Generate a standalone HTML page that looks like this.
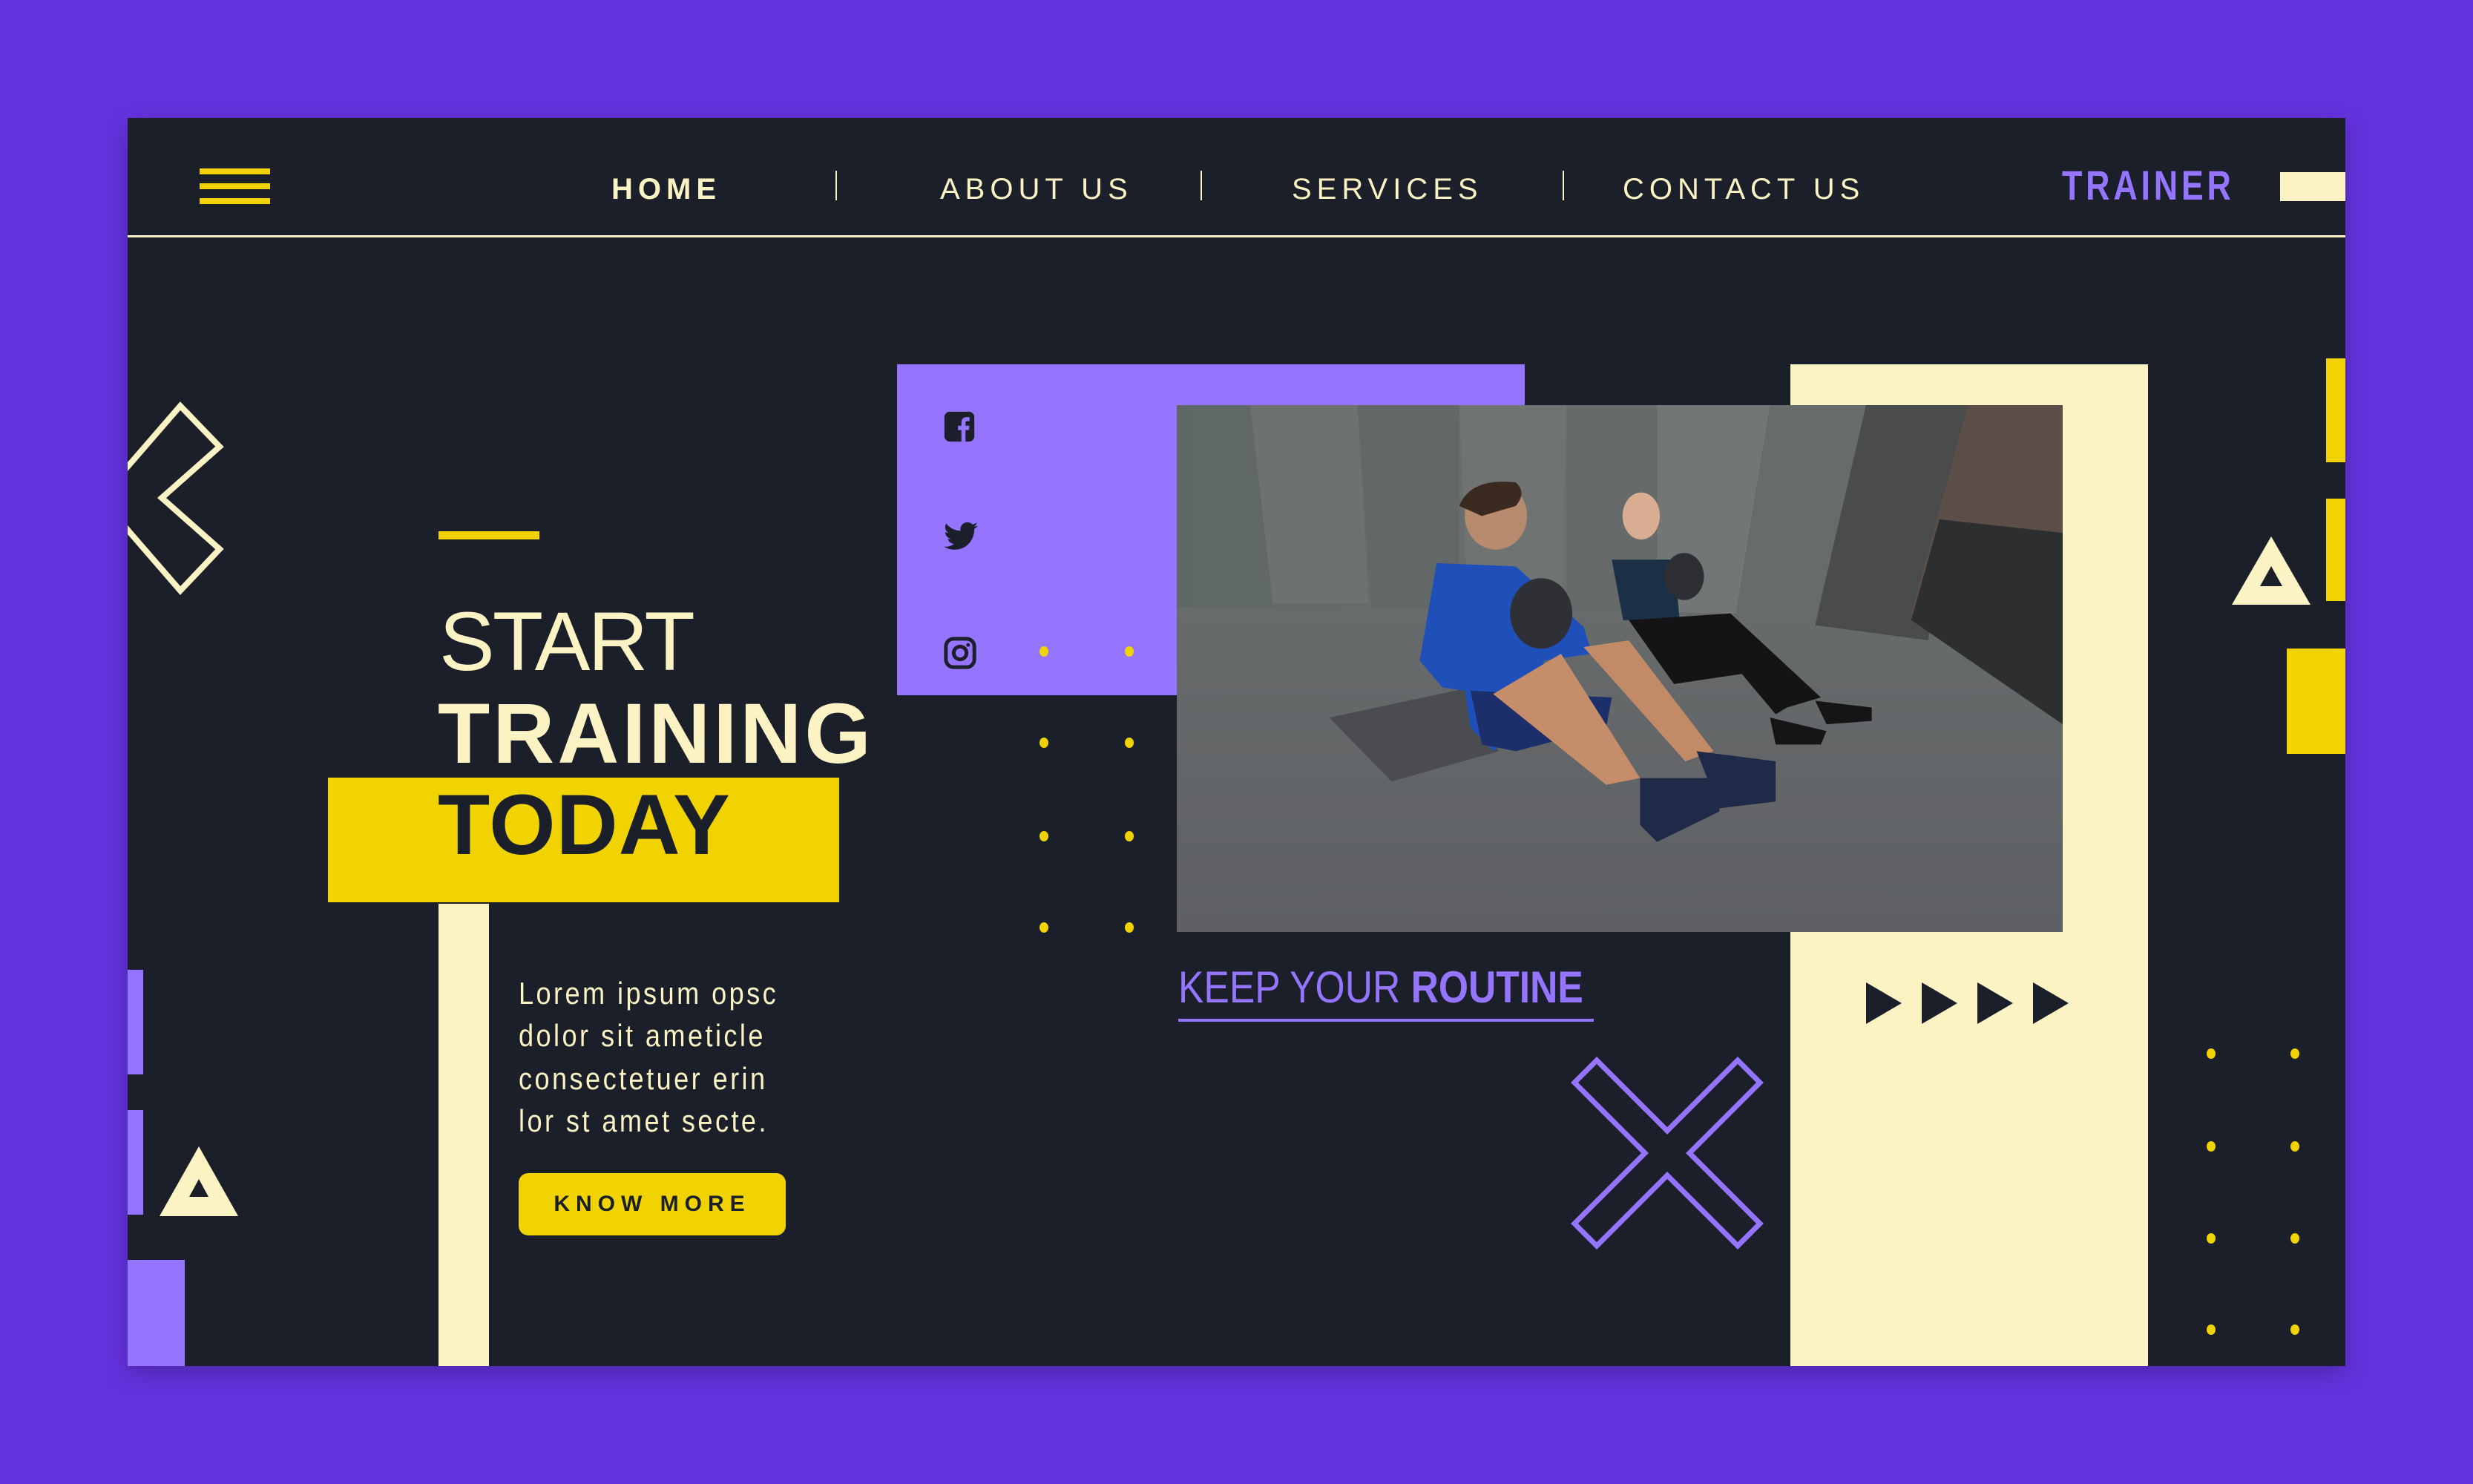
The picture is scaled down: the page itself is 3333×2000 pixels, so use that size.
<!DOCTYPE html>
<html><head><meta charset="utf-8"><style>
*{margin:0;padding:0;box-sizing:border-box}
body{width:3333px;height:2000px;background:#6433e0;position:relative;overflow:hidden;font-family:"Liberation Sans",sans-serif}
#card{position:absolute;left:172px;top:159px;width:2989px;height:1682px;background:#1b1f29;overflow:hidden;box-shadow:0 10px 30px rgba(0,0,0,.25)}
.a{position:absolute}
.nav{position:absolute;top:232px;font-size:40px;color:#fbf3c4;letter-spacing:7px;line-height:46px}
.sep{position:absolute;top:230px;width:2px;height:40px;background:#fbf3c4}
.dot{position:absolute;width:12px;height:14px;border-radius:50%;background:#f0d300}
.p{position:absolute;left:699px;font-size:42px;color:#fbf3c4;letter-spacing:4px;transform:scaleX(.86);transform-origin:left;white-space:nowrap}
</style></head><body>
<div id="card"></div>
<div class="a" style="left:0;top:0;width:3333px;height:2000px">
<div class="a" style="left:269px;top:227px;width:95px;height:8px;background:#f0d300"></div>
<div class="a" style="left:269px;top:247px;width:95px;height:8px;background:#f0d300"></div>
<div class="a" style="left:269px;top:267px;width:95px;height:8px;background:#f0d300"></div>
<div class="nav" style="left:824px;font-weight:bold">HOME</div>
<div class="sep" style="left:1126px"></div>
<div class="nav" style="left:1267px">ABOUT US</div>
<div class="sep" style="left:1618px"></div>
<div class="nav" style="left:1741px">SERVICES</div>
<div class="sep" style="left:2106px"></div>
<div class="nav" style="left:2187px">CONTACT US</div>
<div class="a" style="left:2779px;top:218px;font-size:56px;font-weight:bold;color:#9575ff;letter-spacing:6px;line-height:64px;transform:scaleX(.8);transform-origin:left">TRAINER</div>
<div class="a" style="left:3073px;top:232px;width:88px;height:39px;background:#fbf3c4"></div>
<div class="a" style="left:172px;top:317px;width:2989px;height:3px;background:#fbf3c4"></div>

<svg class="a" style="left:172px;top:526px" width="140" height="290"><polyline points="-7,111 71,21 124,76 46,145 124,214 71,270 -7,180" fill="none" stroke="#fbf3c4" stroke-width="8"/></svg>

<div class="a" style="left:591px;top:716px;width:136px;height:11px;background:#f0d300"></div>
<div class="a" style="left:592px;top:800px;font-size:112px;color:#fbf3c4;line-height:130px;letter-spacing:-3px">START</div>
<div class="a" style="left:442px;top:1048px;width:689px;height:168px;background:#f0d300"></div>
<div class="a" style="left:590px;top:924px;font-size:115px;font-weight:bold;color:#fbf3c4;line-height:130px;letter-spacing:4px">TRAINING</div>
<div class="a" style="left:590px;top:1047px;font-size:115px;font-weight:bold;color:#1b1f29;line-height:130px;letter-spacing:1px">TODAY</div>
<div class="a" style="left:591px;top:1218px;width:68px;height:623px;background:#fbf3c4"></div>

<div class="p" style="top:1315px">Lorem ipsum opsc</div>
<div class="p" style="top:1372px">dolor sit ameticle</div>
<div class="p" style="top:1430px">consectetuer erin</div>
<div class="p" style="top:1487px">lor st amet secte.</div>
<div class="a" style="left:699px;top:1581px;width:360px;height:84px;background:#f0d300;border-radius:13px;font-weight:bold;font-size:30px;letter-spacing:8px;color:#1b1f29;text-align:center;line-height:84px">KNOW MORE</div>

<div class="a" style="left:172px;top:1307px;width:21px;height:141px;background:#9575ff"></div>
<div class="a" style="left:172px;top:1496px;width:21px;height:141px;background:#9575ff"></div>
<div class="a" style="left:172px;top:1698px;width:77px;height:143px;background:#9575ff"></div>
<svg class="a" style="left:215px;top:1545px" width="106" height="95"><polygon points="53,0 106,94 0,94" fill="#fbf3c4"/><polygon points="53,44 66,68 40,68" fill="#1b1f29"/></svg>

<div class="a" style="left:1209px;top:491px;width:846px;height:446px;background:#9575ff"></div>
<svg class="a" style="left:1271px;top:553px" width="44" height="44" viewBox="0 0 24 24"><rect x="1" y="1" width="22" height="22" rx="4" fill="#1b1f29"/><path d="M16.5 23V14.5H19L19.4 11.3H16.5V9.4C16.5 8.5 16.8 7.9 18 7.9H19.5V5.1C19.2 5 18.3 5 17.3 5 15 5 13.5 6.4 13.5 8.9V11.3H11V14.5H13.5V23Z" fill="#9575ff"/></svg>
<svg class="a" style="left:1270px;top:703px" width="50" height="46" viewBox="0 0 24 22"><path d="M23 2.5c-.8.4-1.7.6-2.6.7.9-.6 1.6-1.4 2-2.5-.9.5-1.9.9-2.9 1.1C18.7.9 17.5.4 16.2.4c-2.5 0-4.5 2-4.5 4.5 0 .4 0 .7.1 1C8 5.7 4.7 3.900 2.5 1.2c-.4.7-.6 1.4-.6 2.3 0 1.6.8 2.9 2 3.7-.7 0-1.4-.2-2-.6v.1c0 2.2 1.6 4 3.6 4.4-.4.1-.8.2-1.2.2-.3 0-.6 0-.8-.1.6 1.8 2.2 3.1 4.200 3.1-1.5 1.2-3.5 1.9-5.6 1.9-.4 0-.7 0-1.100-.1 2 1.3 4.4 2 6.9 2 8.3 0 12.8-6.9 12.8-12.8v-.6c.9-.6 1.6-1.4 2.3-2.2z" fill="#1b1f29"/></svg>
<svg class="a" style="left:1271px;top:857px" width="46" height="46" viewBox="0 0 24 24"><rect x="2" y="2" width="20" height="20" rx="5.5" fill="none" stroke="#1b1f29" stroke-width="2.6"/><circle cx="12" cy="12" r="4.5" fill="none" stroke="#1b1f29" stroke-width="2.6"/><circle cx="17.6" cy="6.4" r="1.3" fill="#1b1f29"/></svg>

<div class="dot" style="left:1401px;top:871px"></div><div class="dot" style="left:1516px;top:871px"></div>
<div class="dot" style="left:1401px;top:994px"></div><div class="dot" style="left:1516px;top:994px"></div>
<div class="dot" style="left:1401px;top:1120px"></div><div class="dot" style="left:1516px;top:1120px"></div>
<div class="dot" style="left:1401px;top:1243px"></div><div class="dot" style="left:1516px;top:1243px"></div>
<div class="dot" style="left:2974px;top:1413px"></div><div class="dot" style="left:3087px;top:1413px"></div>
<div class="dot" style="left:2974px;top:1538px"></div><div class="dot" style="left:3087px;top:1538px"></div>
<div class="dot" style="left:2974px;top:1662px"></div><div class="dot" style="left:3087px;top:1662px"></div>
<div class="dot" style="left:2974px;top:1785px"></div><div class="dot" style="left:3087px;top:1785px"></div>

<div class="a" style="left:2413px;top:491px;width:482px;height:1350px;background:#fbf3c4"></div>

<svg class="a" style="left:1586px;top:546px" width="1194" height="710" viewBox="0 0 1568 1568" preserveAspectRatio="none">
<defs><linearGradient id="fl" x1="0" y1="0" x2="0" y2="1"><stop offset="0" stop-color="#6e7270"/><stop offset="1" stop-color="#5e6064"/></linearGradient>
<linearGradient id="wl" x1="0" y1="0" x2="1" y2="0"><stop offset="0" stop-color="#5e6766"/><stop offset=".5" stop-color="#6d716f"/><stop offset=".85" stop-color="#4f5252"/><stop offset="1" stop-color="#9a9a9a"/></linearGradient></defs>
<rect width="1568" height="1568" fill="url(#fl)"/>
<rect width="1568" height="600" fill="url(#wl)"/>
<polygon points="130,0 320,0 340,590 170,590" fill="#6b7270"/>
<polygon points="320,0 500,0 500,605 345,605" fill="#626867"/>
<polygon points="500,0 690,0 680,610 515,605" fill="#6f7473"/>
<polygon points="690,0 850,0 850,610 690,610" fill="#666b6a"/>
<polygon points="850,0 1050,0 990,620 850,615" fill="#727675"/>
<polygon points="1050,0 1220,0 1130,650 990,630" fill="#676b6a"/>
<polygon points="1220,0 1400,0 1330,700 1130,655" fill="#4a4c4c"/>
<polygon points="1400,0 1568,0 1568,900 1300,620" fill="#5b4d48"/>
<polygon points="1350,340 1568,380 1568,950 1300,640" fill="#2d2e30"/>
<polygon points="270,930 520,840 570,1030 380,1120" fill="#4a4c50"/>
<path d="M460,470 L600,480 L720,660 L735,740 L650,760 L640,880 L560,1030 L520,960 L510,850 L470,840 L430,760 Z" fill="#1f4fb8"/>
<path d="M520,850 L770,870 L760,960 L600,1030 L540,1010 Z" fill="#1d2f6a"/>
<ellipse cx="565" cy="330" rx="55" ry="100" fill="#b88a6e"/>
<path d="M500,300 Q520,215 600,230 Q620,260 600,300 L540,330 Z" fill="#3a2a20"/>
<path d="M560,860 L680,740 L820,1110 L760,1130 Z" fill="#c58d6a"/>
<path d="M720,720 L800,700 L950,1030 L900,1060 Z" fill="#c28a67"/>
<path d="M820,1110 L970,1110 L960,1210 L850,1300 L820,1250 Z" fill="#1e2a48"/>
<path d="M920,1030 L1060,1060 L1060,1180 L960,1200 Z" fill="#1e2a48"/>
<ellipse cx="645" cy="620" rx="55" ry="105" fill="#2e3036"/>
<ellipse cx="822" cy="330" rx="33" ry="70" fill="#d8ad92"/>
<path d="M770,460 L880,460 L890,640 L790,640 Z" fill="#1b3046"/>
<path d="M800,640 L980,620 L1140,870 L1080,900 L1060,920 L1000,800 L880,830 Z" fill="#141416"/>
<path d="M1050,930 L1150,970 L1140,1010 L1060,1010 Z" fill="#151517"/>
<path d="M1130,880 L1230,900 L1230,940 L1150,950 Z" fill="#151517"/>
<ellipse cx="898" cy="510" rx="35" ry="70" fill="#2d2f34"/>
</svg>

<div class="a" style="left:1588px;top:1296px;font-size:60px;color:#9575ff;line-height:70px;white-space:nowrap;transform:scaleX(.86);transform-origin:left">KEEP YOUR <b>ROUTINE</b></div>
<div class="a" style="left:1588px;top:1373px;width:560px;height:4px;background:#9575ff"></div>

<svg class="a" style="left:2115px;top:1422px" width="264" height="264"><polygon points="7,37 37,7 132,102 227,7 257,37 162,132 257,227 227,257 132,162 37,257 7,227 102,132" fill="none" stroke="#9575ff" stroke-width="7"/></svg>

<svg class="a" style="left:2515px;top:1324px" width="275" height="56"><polygon points="0,0 48,28 0,56" fill="#1b1f29"/><polygon points="75,0 123,28 75,56" fill="#1b1f29"/><polygon points="150,0 198,28 150,56" fill="#1b1f29"/><polygon points="225,0 273,28 225,56" fill="#1b1f29"/></svg>

<div class="a" style="left:3135px;top:483px;width:26px;height:140px;background:#f0d300"></div>
<div class="a" style="left:3135px;top:672px;width:26px;height:138px;background:#f0d300"></div>
<div class="a" style="left:3082px;top:874px;width:79px;height:142px;background:#f0d300"></div>
<svg class="a" style="left:3008px;top:723px" width="106" height="92"><polygon points="53,0 106,92 0,92" fill="#fbf3c4"/><polygon points="53,40 68,67 38,67" fill="#1b1f29"/></svg>
</div>
</body></html>
